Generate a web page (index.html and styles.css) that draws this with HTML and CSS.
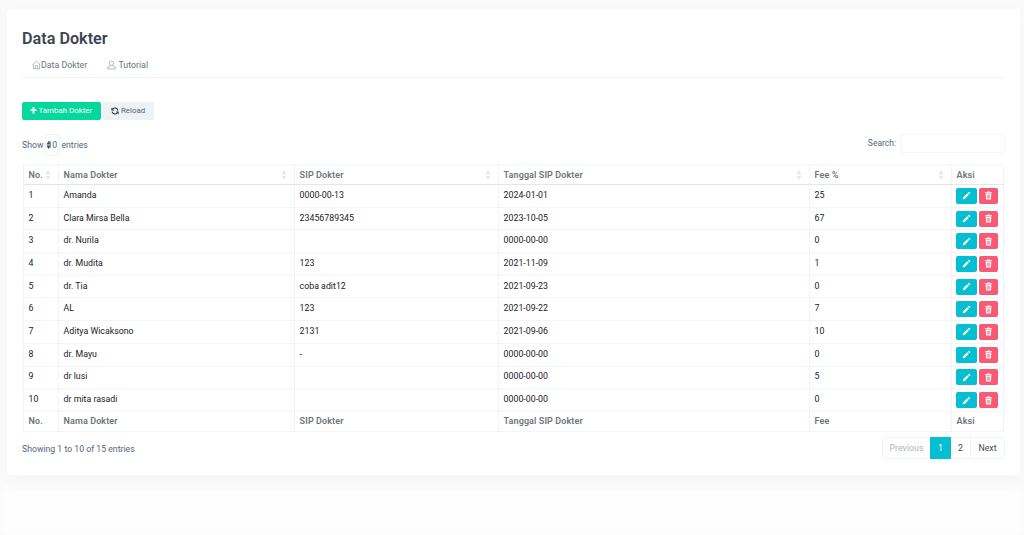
FILE: index.html
```html
<!DOCTYPE html>
<html lang="id">
<head>
<meta charset="utf-8">
<title>Data Dokter</title>
<link rel="stylesheet" href="styles.css">
</head>
<body>
<svg class="sprites" width="0" height="0" aria-hidden="true">
  <defs>
    <symbol id="pencil" viewBox="0 0 16 16"><path fill="currentColor" d="M11.6 1.6a1.2 1.2 0 0 1 1.7 0l1.1 1.1a1.2 1.2 0 0 1 0 1.7l-1.3 1.3-2.8-2.8zM9.4 3.8l2.8 2.8-7.4 7.4-3.6.8.8-3.6z"/></symbol>
    <symbol id="trash" viewBox="0 0 16 16"><path fill="currentColor" d="M6 1h4l.6 1.2H14v1.6H2V2.2h3.4zM3 5h10l-.7 10H3.7zm2.4 1.6v6.8h1V6.6zm2.1 0v6.8h1V6.6zm2.1 0v6.8h1V6.6z"/></symbol>
    <symbol id="sort" viewBox="0 0 8 14"><path fill="currentColor" d="M4 0l3.6 6H.4zM4 14L.4 8h7.2z"/></symbol>
  </defs>
</svg>
<main class="card">
  <h1 class="title">Data Dokter</h1>
  <nav class="tabs">
    <a class="tab tab-first">
      <svg class="tab-icon" viewBox="0 0 16 16" fill="none" stroke="currentColor" stroke-width="1"><path d="M1 7.6 8 1.2l7 6.4M2.6 6.2v8.6h10.8V6.2M6 14.8V9h4v5.8"/></svg>Data Dokter
    </a>
    <a class="tab">
      <svg class="tab-icon tab-icon-gap" viewBox="0 0 16 16" fill="none" stroke="currentColor" stroke-width="1"><circle cx="8" cy="4.8" r="3.8"/><path d="M5.8 8.2 5.4 10 1.2 12v3h13.6v-3l-4.2-2-.4-1.8"/></svg>Tutorial
    </a>
  </nav>
  <div class="actions">
    <button class="btn btn-add"><span class="plus">+</span> Tambah Dokter</button>
    <button class="btn btn-reload"><svg class="reload-icon" viewBox="0 0 16 16" fill="none" stroke="currentColor" stroke-width="2.4"><path d="M13.8 6.6A6 6 0 0 0 3.4 4.2L2 6"/><path d="M2.2 9.4a6 6 0 0 0 10.4 2.4L14 10"/><path fill="currentColor" stroke="none" d="M.8 1.2 6.4 6.8H.8zM15.2 14.8 9.6 9.2h5.6z"/></svg> Reload</button>
  </div>
  <div class="controls">
    <label class="length">Show <span class="select">10<svg class="select-arrows"><use href="#sort"/></svg></span> entries</label>
    <label class="search">Search: <span class="search-input"></span></label>
  </div>
  <table class="grid">
    <colgroup>
      <col class="c1"><col class="c2"><col class="c3"><col class="c4"><col class="c5"><col class="c6">
    </colgroup>
    <thead>
      <tr>
        <th>No.<svg class="sort"><use href="#sort"/></svg></th>
        <th>Nama Dokter<svg class="sort"><use href="#sort"/></svg></th>
        <th>SIP Dokter<svg class="sort"><use href="#sort"/></svg></th>
        <th>Tanggal SIP Dokter<svg class="sort"><use href="#sort"/></svg></th>
        <th>Fee %<svg class="sort"><use href="#sort"/></svg></th>
        <th>Aksi</th>
      </tr>
    </thead>
    <tbody>
      <tr><td>1</td><td>Amanda</td><td>0000-00-13</td><td>2024-01-01</td><td>25</td><td class="ops"><span class="op op-edit"><svg><use href="#pencil"/></svg></span><span class="op op-del"><svg><use href="#trash"/></svg></span></td></tr>
      <tr><td>2</td><td>Clara Mirsa Bella</td><td>23456789345</td><td>2023-10-05</td><td>67</td><td class="ops"><span class="op op-edit"><svg><use href="#pencil"/></svg></span><span class="op op-del"><svg><use href="#trash"/></svg></span></td></tr>
      <tr><td>3</td><td>dr. Nurila</td><td></td><td>0000-00-00</td><td>0</td><td class="ops"><span class="op op-edit"><svg><use href="#pencil"/></svg></span><span class="op op-del"><svg><use href="#trash"/></svg></span></td></tr>
      <tr><td>4</td><td>dr. Mudita</td><td>123</td><td>2021-11-09</td><td>1</td><td class="ops"><span class="op op-edit"><svg><use href="#pencil"/></svg></span><span class="op op-del"><svg><use href="#trash"/></svg></span></td></tr>
      <tr><td>5</td><td>dr. Tia</td><td>coba adit12</td><td>2021-09-23</td><td>0</td><td class="ops"><span class="op op-edit"><svg><use href="#pencil"/></svg></span><span class="op op-del"><svg><use href="#trash"/></svg></span></td></tr>
      <tr><td>6</td><td>AL</td><td>123</td><td>2021-09-22</td><td>7</td><td class="ops"><span class="op op-edit"><svg><use href="#pencil"/></svg></span><span class="op op-del"><svg><use href="#trash"/></svg></span></td></tr>
      <tr><td>7</td><td>Aditya Wicaksono</td><td>2131</td><td>2021-09-06</td><td>10</td><td class="ops"><span class="op op-edit"><svg><use href="#pencil"/></svg></span><span class="op op-del"><svg><use href="#trash"/></svg></span></td></tr>
      <tr><td>8</td><td>dr. Mayu</td><td>-</td><td>0000-00-00</td><td>0</td><td class="ops"><span class="op op-edit"><svg><use href="#pencil"/></svg></span><span class="op op-del"><svg><use href="#trash"/></svg></span></td></tr>
      <tr><td>9</td><td>dr lusi</td><td></td><td>0000-00-00</td><td>5</td><td class="ops"><span class="op op-edit"><svg><use href="#pencil"/></svg></span><span class="op op-del"><svg><use href="#trash"/></svg></span></td></tr>
      <tr><td>10</td><td>dr mita rasadi</td><td></td><td>0000-00-00</td><td>0</td><td class="ops"><span class="op op-edit"><svg><use href="#pencil"/></svg></span><span class="op op-del"><svg><use href="#trash"/></svg></span></td></tr>
    </tbody>
    <tfoot>
      <tr><th>No.</th><th>Nama Dokter</th><th>SIP Dokter</th><th>Tanggal SIP Dokter</th><th>Fee</th><th>Aksi</th></tr>
    </tfoot>
  </table>
  <div class="footer">
    <div class="info">Showing 1 to 10 of 15 entries</div>
    <div class="pager">
      <span class="page page-off">Previous</span>
      <span class="page page-on">1</span>
      <span class="page page-two">2</span>
      <span class="page page-next">Next</span>
    </div>
  </div>
</main>
<div class="next-card"></div>
</body>
</html>
```
FILE: styles.css
```css
* { box-sizing: border-box; }
html, body { height: 100%; }
body {
  margin: 0;
  padding: 9px 4px 0 7px;
  background: #fafafa;
  font-family: Roboto, "Liberation Sans", sans-serif;
  font-size: 8.7px;
  color: #54667a;
  overflow: hidden;
}
.sprites { position: absolute; }
.card {
  height: 466px;
  padding: 20px 15px 0;
  background: #fff;
  border-radius: 4px;
  box-shadow: 0 5px 20px rgba(0, 0, 0, .025);
}
.title {
  margin: 0;
  height: 20px;
  font-size: 16.2px;
  line-height: 20px;
  font-weight: 600;
  color: #3e4450;
}
.tabs {
  display: flex;
  height: 27px;
  margin-top: 2px;
  padding: 8px 0 0 10px;
  border-bottom: 1px solid #f0f2f4;
}
.tab {
  display: flex;
  align-items: flex-start;
  font-size: 8.8px;
  line-height: 13px;
  color: #67757c;
}
.tab-first { width: 75px; }
.tab-icon { width: 9px; height: 10px; margin-top: 1px; color: #7f8b93; }
.tab-icon-gap { margin-right: 2.5px; }
.actions {
  display: flex;
  gap: 2px;
  margin-top: 24px;
}
.btn {
  height: 18px;
  padding: 0 8px;
  border: 0;
  border-radius: 2px;
  font: 7.9px/18px Roboto, "Liberation Sans", sans-serif;
  display: flex;
  align-items: center;
  gap: 2px;
}
.btn-add { width: 79px; background: #06d79c; color: #fff; }
.plus { font-size: 12px; font-weight: 700; line-height: 18px; }
.btn-reload { width: 51px; background: #eef2f5; color: #54667a; }
.reload-icon { width: 8px; height: 8px; color: #333b44; }
.controls {
  display: flex;
  justify-content: space-between;
  align-items: center;
  height: 23px;
  margin-top: 13px;
}
.length { display: flex; align-items: center; line-height: 12px; }
.select {
  position: relative;
  width: 15px;
  height: 22px;
  margin: 0 1px 0 2px;
  padding-left: 1px;
  border: 1px solid #f0f2f4;
  border-radius: 3px;
  line-height: 20px;
  color: #54667a;
}
.select-arrows {
  position: absolute;
  left: 0;
  top: 6px;
  width: 5px;
  height: 8px;
  color: #3f4a55;
}
.search { display: flex; align-items: center; gap: 4px; margin-top: -3px; font-size: 8.5px; }
.search-input {
  width: 105px;
  height: 19px;
  border: 1px solid #f6f7f8;
  border-radius: 2px;
}
.grid {
  width: 980px;
  margin: 8px 0 0 1px;
  border-collapse: collapse;
  table-layout: fixed;
  border: 1px solid #e4e7ea;
}
.c1 { width: 35px; } .c2 { width: 236px; } .c3 { width: 204px; }
.c4 { width: 311px; } .c5 { width: 142px; } .c6 { width: 52px; }
th, td {
  padding: 0 4.6px;
  border: 1px solid #f3f4f6;
  text-align: left;
  vertical-align: middle;
}
th {
  position: relative;
  font-size: 9px;
  font-weight: 600;
  color: #6e7579;
  letter-spacing: .1px;
}
thead th { height: 20px; border-bottom: 1px solid #e4e7ea; border-left-color: #eef0f2; }
tfoot th { height: 20px; border-top: 1px solid #eef0f2; }
tfoot tr { border-bottom: 1px solid #dfe2e5; }
td {
  height: 22.7px;
  font-size: 8.8px;
  color: #1c2025;
  padding-bottom: 2px;
}
.ops { padding: 0 3px 0 4px; white-space: nowrap; }
.op {
  display: inline-flex;
  align-items: center;
  justify-content: center;
  height: 16px;
  border-radius: 2px;
  color: #fff;
  vertical-align: middle;
}
.op svg { width: 9px; height: 9px; }
.op-edit { width: 21px; background: #03bfd1; }
.op-del { width: 19px; margin-left: 2px; background: #f65a75; }
.sort {
  position: absolute;
  right: 7px;
  top: 5px;
  width: 6px;
  height: 10px;
  color: #e6e8ea;
}
.footer {
  display: flex;
  justify-content: space-between;
  align-items: flex-start;
  margin-top: 5px;
}
.info { margin-top: 6px; line-height: 12px; }
.pager {
  display: flex;
  height: 22px;
  border: 1px solid #f1f2f4;
  border-radius: 3px;
  font-size: 8.8px;
  line-height: 20px;
  text-align: center;
}
.page { color: #3f4a55; }
.page-off { width: 47px; color: #aeb6bb; }
.page-on { width: 21px; margin: -1px 0; line-height: 22px; background: #03bfd1; color: #fff; }
.page-two { width: 20px; border-right: 1px solid #f1f2f4; }
.page-next { width: 33px; }
.next-card {
  height: 37px;
  margin: 17px 0 0 -3px;
  background: #fefefe;
  box-shadow: 0 0 8px 4px #fefefe;
}
```
